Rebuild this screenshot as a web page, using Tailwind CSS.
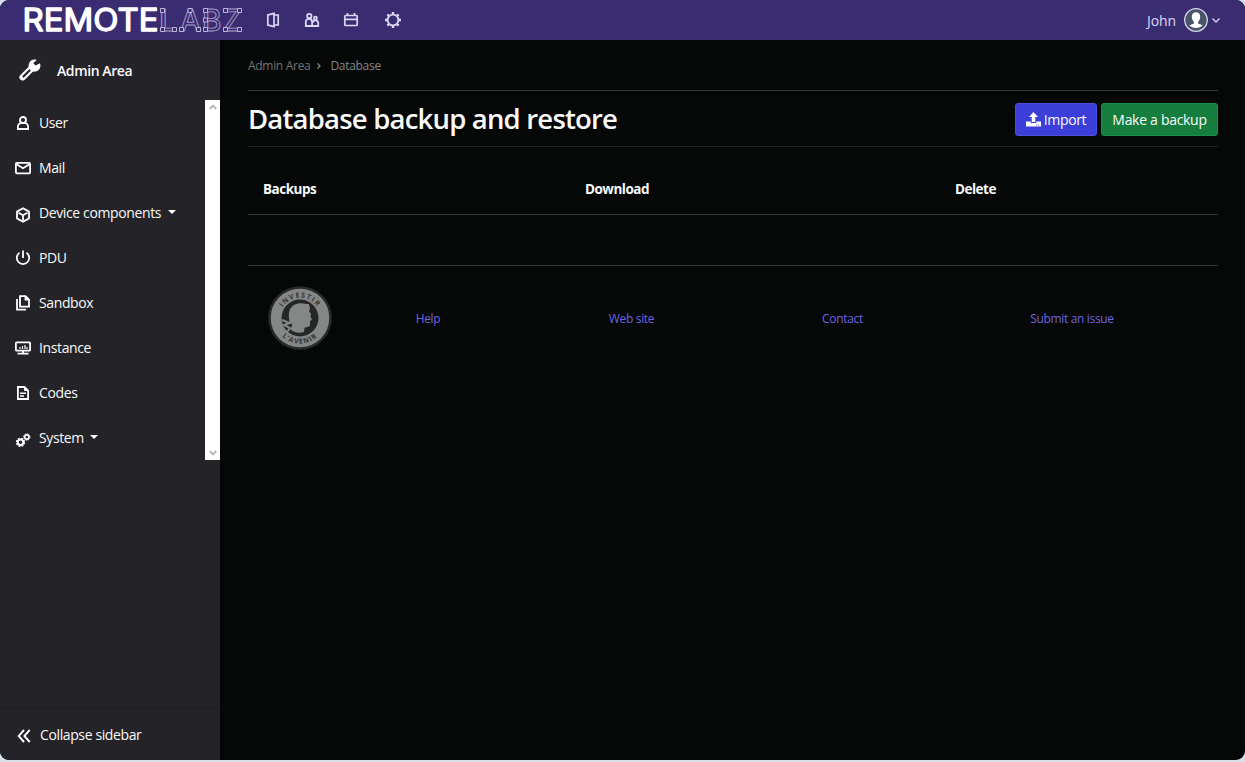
<!DOCTYPE html>
<html lang="en">
<head>
<meta charset="utf-8">
<title>Database backup and restore</title>
<script src="https://cdn.jsdelivr.net/npm/@tailwindcss/browser@4"></script>
</head>
<body class="h-[762px] overflow-hidden bg-[#d5e0e9] font-['Open_Sans','Noto_Sans',sans-serif] text-[14px] text-[#fafafa]">
<div class="flex h-[760px] flex-col overflow-hidden rounded-[9px] bg-[#060807]">
  <header class="flex h-10 shrink-0 items-center bg-[#3a2c70] pr-6 pl-[22px] text-[#dcd6f7]">
    <svg class="h-10 w-[222px] shrink-0" viewBox="22 0 222 40" font-family="Inter, sans-serif">
      <text x="22.500" y="31" font-size="30.500" font-weight="400" textLength="136" lengthAdjust="spacingAndGlyphs" fill="#fff" stroke="#fff" stroke-width="1.300" stroke-linejoin="round">REMOTE</text>
      <g fill="#3a2c70" stroke="#a9a0cc" stroke-width=".9">
        <g font-size="30" font-weight="500">
          <text x="159" y="31" textLength="18" lengthAdjust="spacingAndGlyphs">L</text><text x="180" y="31" textLength="21" lengthAdjust="spacingAndGlyphs">A</text><text x="202" y="31" textLength="19.500" lengthAdjust="spacingAndGlyphs">B</text><text x="222.500" y="31">Z</text>
        </g>
        <path stroke="#c9c2e2" d="M160.500 8.500h4v4h-4zM160.500 27.500h4v4h-4zM172.500 27.500h4v4h-4zM179.500 27.500h4v4h-4zM188 8.500h4v4h-4zM196.500 27.500h4v4h-4zM203.500 8.500h4v4h-4zM203.500 18h4v4h-4zM203.500 27.500h4v4h-4zM223.500 8.500h4v4h-4zM237.500 8.500h4v4h-4zM223.500 27.500h4v4h-4zM237.500 27.500h4v4h-4z"/>
      </g>
    </svg>
    <nav class="ml-[21px] flex items-center gap-[23px] stroke-current" fill="none">
      <svg class="size-4" viewBox="0 0 16 16" fill="none" stroke-width="1.700"><path d="M9 1.400 2.800 3v10l6.200 1.600zM9 3h4.200v10H9"/></svg>
      <svg class="size-4" viewBox="0 0 16 16" fill="none" stroke-width="1.800"><circle cx="5.300" cy="4" r="2.200"/><path d="M1.800 14V10.500a3 3 0 0 1 6.300-1V14zM8.600 14h5.600v-2.800a2.700 2.700 0 0 0-5.300-.8"/><circle cx="11.400" cy="6.200" r="1.500"/></svg>
      <svg class="size-4" viewBox="0 0 16 16" fill="none" stroke-width="1.700"><rect x="1.800" y="3.500" width="12.400" height="10" rx=".8"/><path d="M2 7.300h12M4.500 1v3M11.500 1v3"/></svg>
      <svg class="ml-[2px] size-[18px]" viewBox="0 0 18 18" fill="none"><circle cx="9" cy="9" r="5.400" stroke-width="1.900"/><g stroke-width="2.400"><path d="M9 1v2.400M9 14.600V17M1 9h2.400M14.600 9H17M3.400 3.400 5 5M13 13l1.600 1.600M3.400 14.600 5 13M13 5l1.600-1.600"/></g></svg>
    </nav>
    <div class="ml-auto flex items-center">
      <span class="pt-px tracking-[-0.1px]">John</span>
      <svg class="ml-2 size-6" viewBox="0 0 24 24"><circle cx="12" cy="12" r="11.300" fill="#47546a" stroke="#d8d4e8" stroke-width="1.300"/><path d="M12 4.300c2.800 0 4.300 1.800 4.200 4.500 0 2-.9 4-2.100 5.200v1.500l4.300 1.700c-1.300 1.700-3.700 2.700-6.400 2.700s-5.100-1-6.400-2.700L9.900 15.500V14c-1.200-1.200-2.100-3.200-2.100-5.200-.1-2.700 1.400-4.500 4.200-4.500z" fill="#fff"/></svg>
      <svg class="mr-px ml-1 h-2 w-2" viewBox="0 0 8 8" fill="none" stroke="currentColor" stroke-width="1.300"><path d="m.5 2.500 3.500 3.500 3.500-3.500"/></svg>
    </div>
  </header>
  <div class="flex min-h-0 flex-1">
    <aside class="flex w-[220px] shrink-0 flex-col bg-[#242328]">
      <div class="flex h-[60px] shrink-0 items-center pl-[18px]">
        <svg class="size-6" viewBox="0 0 24 24"><path d="M4.700 19.200 14 10" fill="none" stroke="#fff" stroke-width="6.500" stroke-linecap="round"/><path d="M17.500 7.500 22 5.200c1.200 3.300-.2 6.900-3.500 8.100-2.300.8-4.600.1-6.200-1.500-1.700-1.800-2.200-4.300-1.200-6.600C12.300 2.200 15.500.800 18.600 2l-3.300 3.200z" fill="#fff"/><path d="m5.500 18.500 6-6" stroke="#242328" stroke-width="2.200" stroke-linecap="round"/></svg>
        <span class="ml-[15px] text-[14px] font-semibold tracking-[-0.4px]">Admin Area</span>
      </div>
      <div class="flex h-[360px] shrink-0">
        <nav class="flex w-[205px] flex-col tracking-[-0.38px]">
          <a class="flex h-[45px] items-center gap-2 pl-[15px]"><svg class="size-4" viewBox="0 0 16 16" fill="none" stroke="#fff" stroke-width="1.800"><circle cx="8" cy="5" r="3"/><path d="M2.900 14v-2.300c0-2 1.500-3.700 3.500-3.700h3.200c2 0 3.500 1.700 3.500 3.700V14z"/></svg><span>User</span></a>
          <a class="flex h-[45px] items-center gap-2 pl-[15px]"><svg class="size-4" viewBox="0 0 16 16" fill="none" stroke="#fff" stroke-width="1.800"><rect x=".9" y="2.900" width="14.200" height="10.400" rx="1"/><path d="m1.500 4.300 6.500 4 6.500-4"/></svg><span>Mail</span></a>
          <a class="flex h-[45px] items-center gap-2 pl-[15px]"><svg class="mt-1 size-4" viewBox="0 0 16 16" fill="none" stroke="#fff" stroke-width="1.800" stroke-linejoin="round"><path d="m8 1.200 6 3.400v6.800l-6 3.400-6-3.400V4.600zM3.500 5.800 8 8.300l4.500-2.500M8 8.300v5"/></svg><span>Device components</span><i class="-ml-px mb-[1px] border-x-4 border-t-4 border-x-transparent border-t-white"></i></a>
          <a class="flex h-[45px] items-center gap-2 pl-[15px]"><svg class="size-4" viewBox="0 0 16 16" fill="none" stroke="#fff" stroke-width="1.800"><path d="M4.500 2.800a6.200 6.200 0 1 0 7 0M8 .5v7.500"/></svg><span>PDU</span></a>
          <a class="flex h-[45px] items-center gap-2 pl-[15px]"><svg class="size-4" viewBox="0 0 16 16" fill="none" stroke="#fff" stroke-width="1.800"><path d="M5 1.200h5.500L14 4.700v7H5zM2 4v10.700h9"/><path d="M10.500 1.500v3H14" fill="#fff"/></svg><span>Sandbox</span></a>
          <a class="flex h-[45px] items-center gap-2 pl-[15px]"><svg class="size-4" viewBox="0 0 16 16" fill="none" stroke="#fff" stroke-width="1.800"><rect x=".9" y="2.400" width="14.200" height="8.200" rx=".7"/><path d="M8 10.500v3M2.500 13.600h11"/><path d="M5 9V7M7.500 9V6M10 9V5M12 9V7" stroke-width="1.200"/></svg><span>Instance</span></a>
          <a class="flex h-[45px] items-center gap-2 pl-[15px]"><svg class="size-4" viewBox="0 0 16 16" fill="none" stroke="#fff" stroke-width="1.800"><path d="M2.900 2h6.600l3.600 3.600V14H2.900z"/><path d="M9.500 2.500v3H13" fill="#fff" stroke-width="1"/><path d="M5 8.200h6M5 11h4" stroke-width="1.400"/></svg><span>Codes</span></a>
          <a class="flex h-[45px] items-center gap-2 pl-[15px]"><svg class="mt-1 size-4" viewBox="0 0 16 16" fill="none" stroke="#fff"><circle cx="5.500" cy="10.300" r="2.800" stroke-width="2"/><circle cx="5.500" cy="10.300" r="4.100" stroke-width="1.200" stroke-dasharray="1.900 1.320"/><circle cx="11.800" cy="5" r="2.100" stroke-width="1.700"/><circle cx="11.800" cy="5" r="3.200" stroke-width="1" stroke-dasharray="1.500 1.010"/></svg><span>System</span><i class="-ml-[2px] mb-[1px] border-x-4 border-t-4 border-x-transparent border-t-white"></i></a>
        </nav>
        <div class="flex w-[15px] shrink-0 flex-col items-center justify-between bg-white py-1">
          <svg class="h-[7px] w-2" viewBox="0 0 8 7" fill="none" stroke="#b9b9b9" stroke-width="2"><path d="m.7 5 3.300-3.300L7.300 5"/></svg>
          <svg class="h-[7px] w-2" viewBox="0 0 8 7" fill="none" stroke="#b9b9b9" stroke-width="2"><path d="m.7 2 3.300 3.300L7.300 2"/></svg>
        </div>
      </div>
      <div class="mt-auto flex h-[53px] items-center border-t border-[#1b1e21] pl-[17px]">
        <svg class="mt-1 size-[14px]" viewBox="0 0 14 14" fill="none" stroke="#fff" stroke-width="1.900"><path d="M7 1 1.700 7 7 13M12.700 1 7.400 7l5.300 6"/></svg>
        <span class="ml-[9px] mt-px tracking-[-0.38px]">Collapse sidebar</span>
      </div>
    </aside>
    <main class="min-w-0 flex-1 pr-[27px] pl-7">
      <div class="flex h-[51px] items-center border-b border-[#35373a] pt-px text-[12px] text-[#737373]">
        <span class="tracking-[-0.3px]">Admin Area</span>
        <svg class="mr-[7px] ml-[6px] size-[6px]" viewBox="0 0 6 6" fill="none" stroke="#8a8a8a" stroke-width="1.200"><path d="m1.500.500 2.500 2.500-2.500 2.500"/></svg>
        <span class="ml-px font-medium tracking-[-0.3px] text-[#858585]">Database</span>
      </div>
      <div class="flex h-14 items-center border-b border-[#1d2323] pt-px">
        <h1 class="text-[27.5px] font-semibold tracking-[-0.8px]">Database backup and restore</h1>
        <div class="ml-auto flex gap-1 tracking-[-0.35px]">
          <button class="flex h-[33px] w-[82px] items-center justify-center gap-[3px] rounded-[3px] border border-[#514ddc] bg-[#3b3fd8] pt-px"><svg class="size-[15px]" viewBox="0 0 15 15" fill="#fff"><path d="M7.500 0 12 5H9.300v5H5.700V5H3zM0 9.500h4.700V11h5.600V9.500H15v5H0z"/><path d="M10 12.500h1.200v1H10zM12 12.500h1.200v1H12z" fill="#7774e5"/></svg><span>Import</span></button>
          <button class="h-[33px] w-[117px] rounded-[3px] border border-[#198f48] bg-[#157e3f] pt-px tracking-[-0.3px]">Make a backup</button>
        </div>
      </div>
      <div class="grid h-[68px] grid-cols-[322px_370px_263px] border-b border-[#35373a] pt-8 pl-[15px] text-[13.5px] font-bold tracking-[-0.5px]">
        <span>Backups</span><span>Download</span><span>Delete</span>
      </div>
      <div class="h-[51px] border-b border-[#35373a]"></div>
      <footer class="grid h-[105px] grid-cols-[104px_152px_255px_167px_292px] items-center justify-items-center text-[12px] tracking-[-0.33px] text-[#6f63e0]">
        <svg class="-mt-px size-16" viewBox="0 0 64 64"><defs><path id="top" d="M11.500 32a20.500 20.500 0 0 1 41 0"/><path id="bottom" d="M6.300 32a25.700 25.700 0 0 0 51.400 0"/></defs><circle cx="32" cy="32" r="30.500" fill="#858786" stroke="#292b2a" stroke-width="2.500"/><circle cx="32" cy="32" r="18.500" fill="#252726"/><path d="M21 32c-1-8 2-13 9-14.500 4-1 7 .5 11 .5l1 5-1 2 2 3-.5 2 1.500 4-2 1v4c-1 3-4 1.500-5.500 3l-.5 4c-5 2-11 0-14-3 2-2 2-3 2-5-2-1-3-3-3-6z" fill="#858786"/><path d="m14 34 8 3-6 2 6 3-3 4" fill="none" stroke="#858786" stroke-width="2"/><g font-family="Open Sans, sans-serif" font-size="7" font-weight="700" fill="#333534" text-anchor="middle"><text letter-spacing="1.300"><textPath href="#top" startOffset="50%">INVESTIR</textPath></text><text letter-spacing="1"><textPath href="#bottom" startOffset="50%">L’AVENIR</textPath></text></g></svg>
        <a>Help</a><a>Web site</a><a>Contact</a><a>Submit an issue</a>
      </footer>
    </main>
  </div>
</div>
</body>
</html>
